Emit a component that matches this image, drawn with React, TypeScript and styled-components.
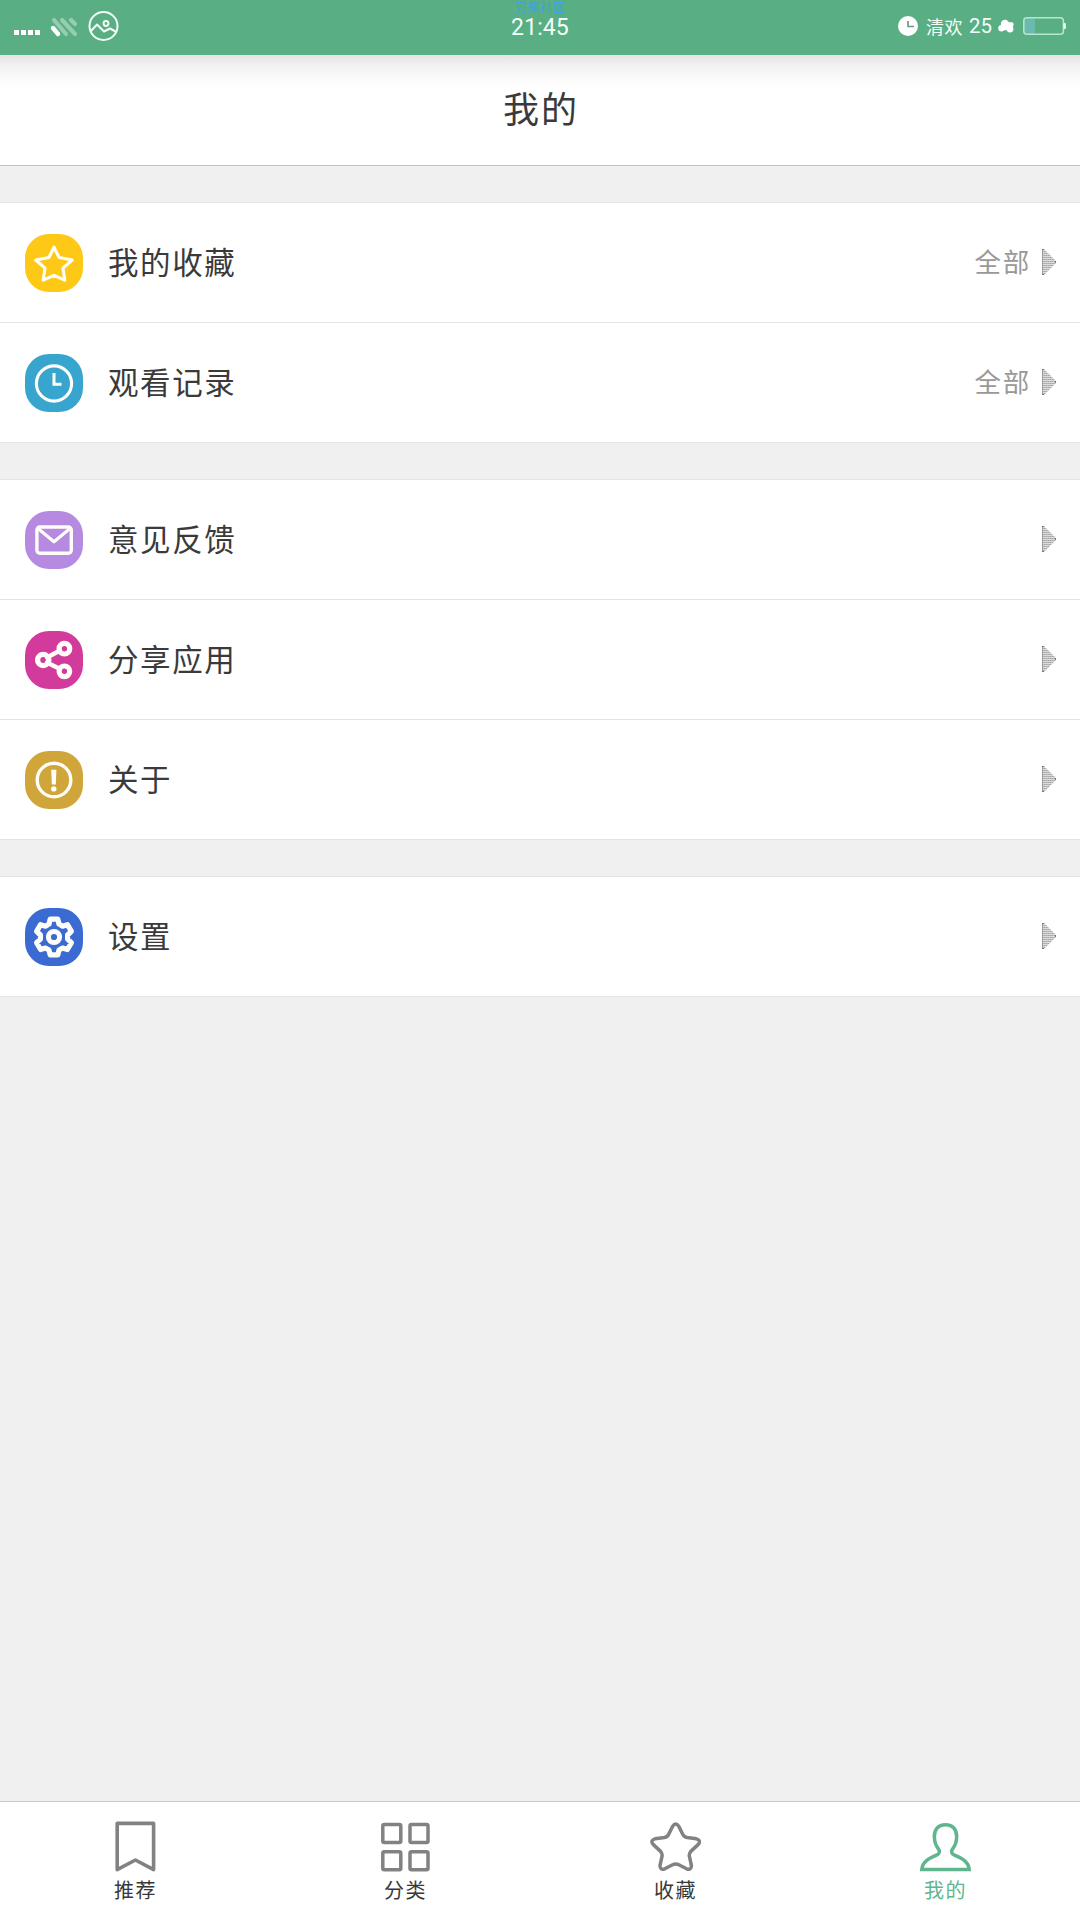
import React from "react";
import styled, { createGlobalStyle } from "styled-components";

const Global = createGlobalStyle`
  * { box-sizing: border-box; }
  body { margin: 0; background: #f0f0f0; font-family: "Noto Sans CJK SC", sans-serif; color: #3a3a3a; }
  svg { display: block; flex: none; }
`;

const Screen = styled.div`
  width: 1080px;
  height: 1920px;
  display: flex;
  flex-direction: column;
  background: #f0f0f0;
`;

const StatusBar = styled.header`
  height: 55px;
  flex: none;
  display: grid;
  grid-template-columns: 1fr 120px 1fr;
  background: #59ae84;
  color: #f4fff9;
`;

const StatusLeft = styled.div`
  display: flex;
  align-items: center;
  padding: 0 0 4px 14px;
`;

const StatusMiddle = styled.div`
  display: flex;
  flex-direction: column;
  align-items: center;
`;

const Carrier = styled.span`
  height: 14px;
  flex: none;
  font-size: 12px;
  line-height: 14px;
  letter-spacing: 0.7px;
  color: #3ba4e4;
`;

const Clock = styled.span`
  font-family: Roboto, sans-serif;
  font-size: 23px;
  line-height: 27px;
  letter-spacing: 0.1px;
`;

const StatusRight = styled.div`
  display: flex;
  align-items: center;
  justify-content: flex-end;
  padding: 0 14px 3px 0;
`;

const Nick = styled.span`
  margin: 0 6px 0 8px;
  font-size: 18px;
  line-height: 24px;
  letter-spacing: 0.5px;
`;

const Percent = styled.span`
  margin-right: 6px;
  font-family: Roboto, sans-serif;
  font-size: 20.5px;
  line-height: 24px;
`;

const TitleBar = styled.div`
  height: 111px;
  flex: none;
  display: flex;
  align-items: center;
  justify-content: center;
  padding: 0 0 7px 2px;
  border-bottom: 1px solid #c4c4c4;
  background: linear-gradient(#e4e4e4, #f2f2f2 11px, #fbfbfb 24px, #fff 34px);
`;

const Title = styled.h1`
  margin: 0;
  font-size: 36px;
  font-weight: 400;
  line-height: 48px;
  letter-spacing: 2px;
`;

const Content = styled.main`
  flex: 1;
`;

const Group = styled.section`
  margin-top: 36px;
  border-top: 1px solid #e4e4e4;
  background: #fff;
`;

const Row = styled.div`
  height: 120px;
  display: flex;
  align-items: center;
  padding: 0 24px 0 25px;
  border-bottom: 1px solid #e4e4e4;
`;

const Badge = styled.span<{ $color: string }>`
  width: 58px;
  height: 58px;
  flex: none;
  border-radius: 24px;
  background: ${(p) => p.$color};
`;

const Label = styled.span`
  flex: 1;
  margin-left: 25px;
  padding-bottom: 4px;
  font-size: 30.5px;
  line-height: 40px;
  letter-spacing: 1.6px;
`;

const Extra = styled.span`
  margin-right: 11px;
  padding-bottom: 4px;
  font-size: 26.5px;
  line-height: 36px;
  letter-spacing: 1.7px;
  color: #999;
`;

const TabBar = styled.nav`
  height: 119px;
  flex: none;
  display: grid;
  grid-template-columns: repeat(4, 1fr);
  border-top: 1px solid #c8c8c8;
  background: #fff;
`;

const Tab = styled.div<{ $active?: boolean }>`
  display: flex;
  flex-direction: column;
  align-items: center;
  padding-top: 18px;
  color: ${(p) => (p.$active ? "#5fb68e" : "#383838")};
`;

const TabLabel = styled.span`
  margin-top: 2px;
  padding-left: 1px;
  font-size: 20px;
  line-height: 28px;
  letter-spacing: 1.5px;
`;

const SignalIcon = () => (
  <svg width="74" height="32" viewBox="0 0 74 32" fill="none">
    <g fill="#fff">
      <rect x="0" y="20" width="5" height="5" />
      <rect x="7" y="20" width="5" height="5" />
      <rect x="14" y="20" width="5" height="5" />
      <rect x="21" y="20" width="5" height="5" />
    </g>
    <g stroke="#97ccb0" strokeWidth="4.2" strokeLinecap="round">
      <path d="M40 10L52 24M48 10L61 24M57 10L61 14" />
    </g>
    <path d="M39 18L44 24" stroke="#fff" strokeWidth="4.4" strokeLinecap="round" />
  </svg>
);

const GalleryIcon = () => (
  <svg width="32" height="32" viewBox="0 0 32 32" fill="none" stroke="#effff6" strokeWidth="2">
    <circle cx="15.5" cy="16" r="14" />
    <circle cx="18" cy="13.5" r="2.4" />
    <path d="M2.5 21.5L9 14.5L16 21.5L22 18.5L28.5 22" strokeLinejoin="round" />
  </svg>
);

const AlarmIcon = () => (
  <svg width="20" height="20" viewBox="0 0 20 20">
    <circle cx="10" cy="10" r="10" fill="#fff" />
    <path d="M10 5V10.5H16" fill="none" stroke="#6f9784" strokeWidth="1.7" />
  </svg>
);

const CloudIcon = () => (
  <svg width="16" height="14" viewBox="0 0 16 14" fill="#fff">
    <circle cx="7" cy="5" r="4.2" />
    <circle cx="3.5" cy="9.3" r="3.2" />
    <circle cx="13" cy="5.6" r="2.6" />
    <circle cx="12" cy="10" r="3.4" />
    <path d="M4 7H12V10.5L8.5 11.3L4 11Z" />
  </svg>
);

const BatteryIcon = () => (
  <svg width="43" height="18" viewBox="0 0 43 18" style={{ marginLeft: 9 }}>
    <rect x="1" y="1" width="11" height="16" rx="2" fill="#6bbab0" />
    <rect x="0.8" y="0.8" width="39.6" height="16.4" rx="3" fill="none" stroke="#b9e6cc" strokeWidth="1.5" />
    <rect x="40.5" y="6" width="2.3" height="6" rx="1" fill="#f0fff6" />
  </svg>
);

const glyphs: Record<string, React.ReactNode> = {
  star: (
    <path
      d="M29 13.2L34 23.4L47.2 26L38 34.2L39.8 46.2L29 41.4L18.2 46.2L20 34.2L10.8 26L24 23.4Z"
      strokeWidth="3.1"
    />
  ),
  clock: (
    <>
      <circle cx="29" cy="29.5" r="17.6" strokeWidth="3.1" />
      <path d="M29 19V30.2H36.5" strokeWidth="3" strokeLinejoin="miter" strokeLinecap="butt" />
    </>
  ),
  mail: (
    <>
      <rect x="11.9" y="16" width="34.4" height="26.2" rx="3" strokeWidth="3.4" />
      <path d="M13 17.5L29 30.8L45 17.5" strokeWidth="3.2" />
    </>
  ),
  share: (
    <>
      <path d="M22 26.5L35 19.5M22 31.5L35 38" strokeWidth="4.4" />
      <circle cx="18.2" cy="29" r="5.6" strokeWidth="5.4" />
      <circle cx="39.4" cy="17.7" r="5.3" strokeWidth="5.2" />
      <circle cx="39.4" cy="40.3" r="5.3" strokeWidth="5.2" />
    </>
  ),
  about: (
    <>
      <circle cx="29" cy="29" r="16.8" strokeWidth="3.4" />
      <path d="M26.2 18.7H31.4L30.8 33.6H26.8Z" fill="#fff" stroke="none" />
      <circle cx="28.8" cy="37.9" r="2.7" fill="#fff" stroke="none" />
    </>
  ),
  gear: (
    <>
      <path
        d="M25.2 11.2H32.8L34 16.1L37.6 18.2L42.4 16.6L46.4 23.4L42.6 27V31.2L46.4 34.7L42.4 41.5L37.6 40L34 42L32.8 46.9H25.2L24 42L20.4 40L15.6 41.5L11.6 34.7L15.4 31.2V27L11.6 23.4L15.6 16.6L20.4 18.2L24 16.1Z"
        strokeWidth="5.2"
      />
      <circle cx="29" cy="29" r="5.6" strokeWidth="5" />
    </>
  ),
};

const RowIcon = ({ name }: { name: string }) => (
  <svg width="58" height="58" viewBox="0 0 58 58" fill="none" stroke="#fffdf8" strokeLinejoin="round" strokeLinecap="round">
    {glyphs[name]}
  </svg>
);

const Arrow = () => (
  <svg width="14" height="26" viewBox="0 0 14 26" style={{ marginTop: -2 }}>
    <defs>
      <pattern id="mesh" width="2" height="2" patternUnits="userSpaceOnUse">
        <rect width="2" height="2" fill="#dcdcdc" />
        <rect width="2" height="1" fill="#b9b9b9" />
        <rect width="1" height="1" fill="#a6a6a6" />
      </pattern>
    </defs>
    <path d="M0 0H2L14 12V14L2 26H0Z" fill="url(#mesh)" />
    <path d="M0 0H1V26H0Z" fill="#9a9a9a" />
    <path d="M0 0H2V1H0ZM0 25H2V26H0ZM13 12H14V14H13Z" fill="#777" />
  </svg>
);

const tabShapes: Record<string, React.ReactNode> = {
  bookmark: <path d="M7.2 3.4H43.6V49.6L25.4 40L7.2 49.6Z" strokeWidth="3.6" />,
  grid: (
    <>
      <rect x="2.8" y="4.5" width="18" height="18" rx="1.5" />
      <rect x="30" y="4.5" width="18" height="18" rx="1.5" />
      <rect x="2.8" y="31.7" width="18" height="18" rx="1.5" />
      <rect x="30" y="31.7" width="18" height="18" rx="1.5" />
    </>
  ),
  star: (
    <path d="M22.5 6.4Q25.7 1.8 28.9 6.4L32.7 14.2Q34 17 37 17.5L46.4 18.8Q51.8 20.6 47.8 24.9L40.8 31.4Q38.8 33.4 39.4 36.4L41.4 45.4Q41.4 50.6 36.6 48.8L28.8 44.8Q25.7 43.2 22.6 44.8L14.8 48.8Q9.9 50.6 10 45.4L12 36.4Q12.6 33.4 10.6 31.4L3.6 24.9Q-.4 20.6 5 18.8L14.4 17.5Q17.4 17 18.7 14.2Z" />
  ),
  user: (
    <path d="M25.5 4.7C33 4.7 37 9.8 36.6 17.5C36.4 24 34.8 26 32.8 28.6C31 31 31.2 33.6 34 34.8C41.5 38 48.6 41.3 49.2 49.4H1.8C2.4 41.3 9.5 38 17 34.8C19.8 33.6 20 31 18.2 28.6C16.2 26 14.6 24 14.4 17.5C14 9.8 18 4.7 25.5 4.7Z" strokeLinejoin="miter" />
  ),
};

const TabIcon = ({ name, color }: { name: string; color: string }) => (
  <svg width="51" height="54" viewBox="0 0 51 54" fill="none" stroke={color} strokeWidth="3.5" strokeLinejoin="round">
    {tabShapes[name]}
  </svg>
);

const groups = [
  [
    { icon: "star", color: "#fec916", label: "我的收藏", extra: "全部" },
    { icon: "clock", color: "#38a5cf", label: "观看记录", extra: "全部" },
  ],
  [
    { icon: "mail", color: "#b68ae0", label: "意见反馈" },
    { icon: "share", color: "#d23a9b", label: "分享应用" },
    { icon: "about", color: "#d0a539", label: "关于" },
  ],
  [{ icon: "gear", color: "#3a6ad2", label: "设置" }],
] as { icon: string; color: string; label: string; extra?: string }[][];

const tabs = [
  { icon: "bookmark", label: "推荐" },
  { icon: "grid", label: "分类" },
  { icon: "star", label: "收藏" },
  { icon: "user", label: "我的", active: true },
];

export default function App() {
  return (
    <Screen>
      <Global />
      <StatusBar>
        <StatusLeft>
          <SignalIcon />
          <GalleryIcon />
        </StatusLeft>
        <StatusMiddle>
          <Carrier>完聚社区</Carrier>
          <Clock>21:45</Clock>
        </StatusMiddle>
        <StatusRight>
          <AlarmIcon />
          <Nick>清欢</Nick>
          <Percent>25</Percent>
          <CloudIcon />
          <BatteryIcon />
        </StatusRight>
      </StatusBar>
      <TitleBar>
        <Title>我的</Title>
      </TitleBar>
      <Content>
        {groups.map((rows, i) => (
          <Group key={i}>
            {rows.map((row) => (
              <Row key={row.label}>
                <Badge $color={row.color}>
                  <RowIcon name={row.icon} />
                </Badge>
                <Label>{row.label}</Label>
                {row.extra && <Extra>{row.extra}</Extra>}
                <Arrow />
              </Row>
            ))}
          </Group>
        ))}
      </Content>
      <TabBar>
        {tabs.map((tab) => (
          <Tab key={tab.label} $active={tab.active}>
            <TabIcon name={tab.icon} color={tab.active ? "#5fb68e" : "#828282"} />
            <TabLabel>{tab.label}</TabLabel>
          </Tab>
        ))}
      </TabBar>
    </Screen>
  );
}
